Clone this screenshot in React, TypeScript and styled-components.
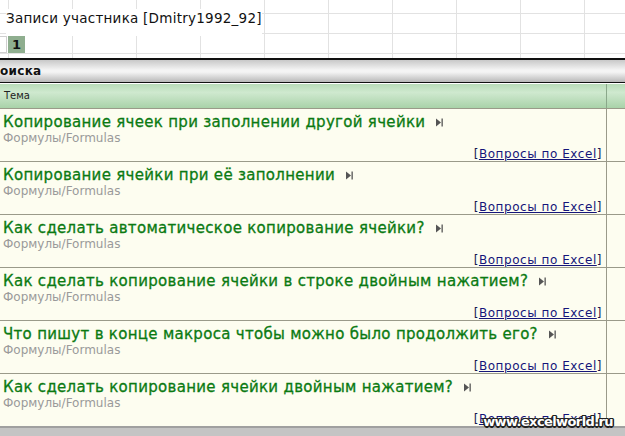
import { Fragment } from "react";
import styled, { createGlobalStyle } from "styled-components";

const GlobalStyle = createGlobalStyle`
  html, body {
    margin: 0;
    padding: 0;
    background: #ffffff;
  }
  body {
    font-family: "DejaVu Sans", Verdana, sans-serif;
    width: 625px;
    height: 436px;
    overflow: hidden;
  }
`;

const PageStyle = styled.div`
  position: relative;
  width: 625px;
  height: 436px;
  overflow: hidden;
  display: flex;
  flex-direction: column;
`;

const SheetStyle = styled.div`
  height: 58px;
  flex-shrink: 0;
  background-color: #fff;
  background-image:
    linear-gradient(to right, #e2e2e2 1px, transparent 1px),
    linear-gradient(to bottom, #e2e2e2 1px, transparent 1px);
  background-size: 64px 100%, 100% 20px;
  background-position: 8px 0, 0 13px;
  padding: 8px 0 0 6px;
  box-sizing: border-box;
`;

const TitleStyle = styled.div`
  font-size: 13.5px;
  letter-spacing: 0.25px;
  color: #111;
  height: 27px;
  background: #fff;
  display: inline-block;
  line-height: 18px;
`;

const PagesStyle = styled.div`
  display: flex;
  margin-left: -6px;
`;

const PageStub = styled.span`
  width: 7px;
  height: 17px;
  border: 1px solid #cfcfcf;
  border-left: none;
  box-sizing: border-box;
  background: #fff;
`;

const PageNum = styled.span<{ $active?: boolean }>`
  width: 17px;
  height: 17px;
  margin-left: 1px;
  background: ${(p) => (p.$active ? "#8fae8f" : "#fff")};
  font-size: 13px;
  font-weight: bold;
  color: #111;
  text-align: center;
  line-height: 17px;
`;

const SearchBar = styled.div`
  height: 22px;
  flex-shrink: 0;
  border-top: 2px solid #111;
  border-bottom: 1px solid #111;
  background: linear-gradient(to bottom, #c8c8c8 0%, #f4f4f4 45%, #f4f4f4 55%, #b8b8b8 100%);
  font-size: 12px;
  font-weight: bold;
  letter-spacing: 0.3px;
  color: #111;
  line-height: 23px;
`;

const Table = styled.div`
  margin-top: 1px;
  display: grid;
  grid-template-columns: 607px 1fr;
  flex: 1;
  background: #c4c4c4;
  align-content: start;
`;

const HeadCell = styled.div`
  height: 24px;
  background: linear-gradient(to bottom, #b8dcb8 0%, #cfe9cf 35%, #a9d2a9 100%);
  border-right: 1px solid #8aa88a;
  font-size: 10px;
  color: #222;
  line-height: 24px;
  padding-left: 4px;
  box-sizing: border-box;
`;

const HeadSide = styled.div`
  height: 24px;
  background: linear-gradient(to bottom, #b8dcb8 0%, #cfe9cf 35%, #a9d2a9 100%);
`;

const RowCell = styled.div`
  height: 53px;
  box-sizing: border-box;
  background: #fdfdf0;
  border-top: 1px solid #9a9a8a;
  border-right: 1px solid #9a9a8a;
  padding: 4px 3px 0 3px;
  display: flex;
  flex-direction: column;
`;

const SideCell = styled.div`
  height: 53px;
  box-sizing: border-box;
  background: #fdfdf0;
  border-top: 1px solid #9a9a8a;
`;

const TopicLine = styled.div`
  display: flex;
  align-items: center;
  gap: 11px;
  height: 20px;
`;

const TopicLink = styled.span`
  font-size: 15px;
  letter-spacing: 0.3px;
  color: #0b7a12;
  -webkit-text-stroke: 0.3px #0b7a12;
  white-space: nowrap;
`;

const Category = styled.div`
  font-size: 12px;
  color: #9a9a9a;
  line-height: 14px;
`;

const ForumLine = styled.div`
  font-size: 12px;
  letter-spacing: 0.55px;
  color: #1a1a50;
  text-align: right;
  line-height: 14px;
  margin-top: 2px;
  padding-right: 1px;
`;

const ForumLink = styled.span`
  color: #15157a;
  text-decoration: underline;
`;

const BottomBar = styled.div`
  grid-column: 1 / 3;
  height: 10px;
  border-top: 2px solid #a0a0a0;
  background: #c4c4c4;
`;

const Watermark = styled.div`
  position: absolute;
  right: 12px;
  bottom: 7px;
  font-family: "DejaVu Sans", Verdana, sans-serif;
  font-size: 13px;
  font-weight: bold;
  color: #fff;
  letter-spacing: -0.6px;
  text-shadow:
    -1px -1px 0 #222, 1px -1px 0 #222, -1px 1px 0 #222, 1px 1px 0 #222,
    0 1.5px 0 #222, 0 -1.5px 0 #222, 1.5px 0 0 #222, -1.5px 0 0 #222;
`;

const LastIcon = () => (
  <svg width="7" height="9" viewBox="0 0 7 9">
    <path d="M0 0.5 L5 4.5 L0 8.5 Z" fill="#555" />
    <rect x="5.5" y="0.5" width="1.3" height="8" fill="#555" />
  </svg>
);

const topics = [
  "Копирование ячеек при заполнении другой ячейки",
  "Копирование ячейки при её заполнении",
  "Как сделать автоматическое копирование ячейки?",
  "Как сделать копирование ячейки в строке двойным нажатием?",
  "Что пишут в конце макроса чтобы можно было продолжить его?",
  "Как сделать копирование ячейки двойным нажатием?",
];

export default function App() {
  return (
    <PageStyle>
      <GlobalStyle />
      <SheetStyle>
        <TitleStyle>Записи участника [Dmitry1992_92]</TitleStyle>
        <PagesStyle>
          <PageStub />
          <PageNum $active>1</PageNum>
        </PagesStyle>
      </SheetStyle>
      <SearchBar>оиска</SearchBar>
      <Table>
        <HeadCell>Тема</HeadCell>
        <HeadSide />
        {topics.map((t) => (
          <Fragment key={t}>
            <RowCell>
              <TopicLine>
                <TopicLink>{t}</TopicLink>
                <LastIcon />
              </TopicLine>
              <Category>Формулы/Formulas</Category>
              <ForumLine>
                [<ForumLink>Вопросы по Excel</ForumLink>]
              </ForumLine>
            </RowCell>
            <SideCell />
          </Fragment>
        ))}
        <BottomBar />
      </Table>
      <Watermark>www.excelworld.ru</Watermark>
    </PageStyle>
  );
}
